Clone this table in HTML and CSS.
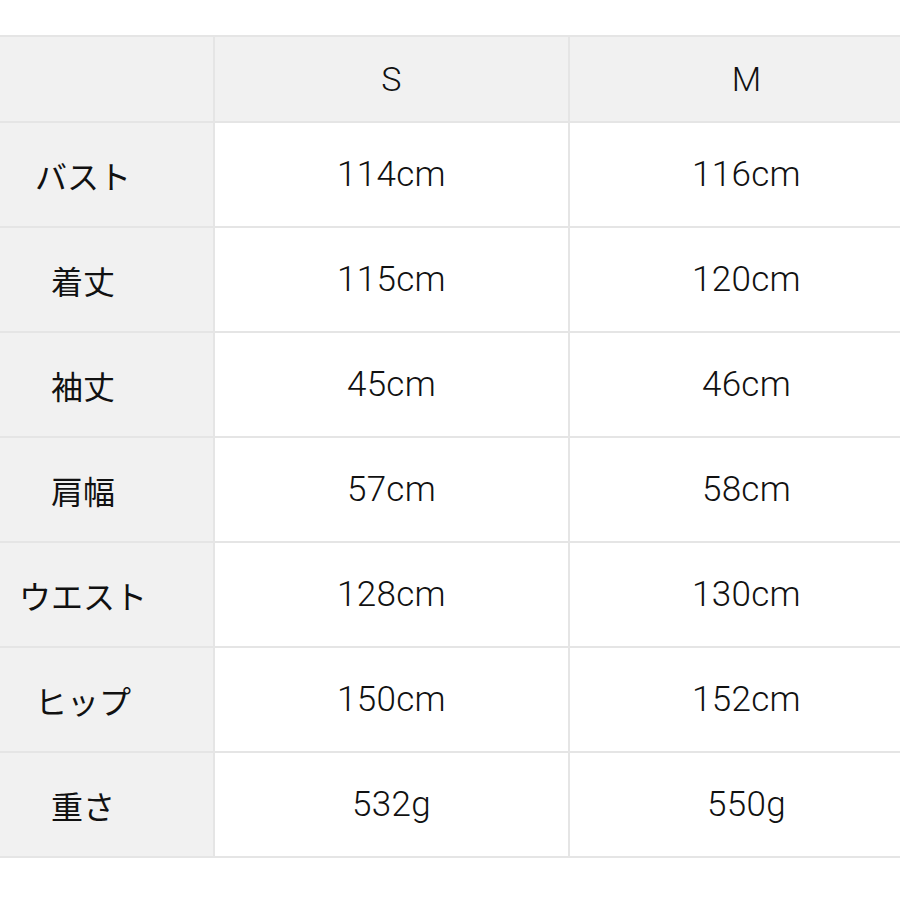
FILE: index.html
```html
<!DOCTYPE html>
<html lang="ja">
<head>
<meta charset="utf-8">
<link rel="stylesheet" href="styles.css">
</head>
<body>
<div class="size-table">
  <div class="cell head label"></div>
  <div class="cell head">S</div>
  <div class="cell head">M</div>

  <div class="cell label">バスト</div>
  <div class="cell">114cm</div>
  <div class="cell">116cm</div>

  <div class="cell label">着丈</div>
  <div class="cell">115cm</div>
  <div class="cell">120cm</div>

  <div class="cell label">袖丈</div>
  <div class="cell">45cm</div>
  <div class="cell">46cm</div>

  <div class="cell label">肩幅</div>
  <div class="cell">57cm</div>
  <div class="cell">58cm</div>

  <div class="cell label">ウエスト</div>
  <div class="cell">128cm</div>
  <div class="cell">130cm</div>

  <div class="cell label">ヒップ</div>
  <div class="cell">150cm</div>
  <div class="cell">152cm</div>

  <div class="cell label">重さ</div>
  <div class="cell">532g</div>
  <div class="cell">550g</div>
</div>
</body>
</html>
```

FILE: styles.css
```css
html, body {
  margin: 0;
  padding: 0;
  background: #ffffff;
  overflow: hidden;
}

body {
  width: 900px;
  height: 900px;
  font-family: Roboto, "Liberation Sans", "Noto Sans CJK JP", sans-serif;
  font-weight: 300;
  color: #111111;
}

.size-table {
  margin-top: 35px;
  margin-left: -47px;
  width: 970px;
  display: grid;
  grid-template-columns: 260px 353px 353px;
  grid-template-rows: 84px repeat(7, 103px);
  gap: 2px;
  padding: 2px 0 2px 0;
  background: #e5e5e5;
}

.cell {
  background: #ffffff;
  display: flex;
  align-items: center;
  justify-content: center;
  font-size: 35px;
  letter-spacing: 0.3px;
}

.head {
  background: #f1f1f1;
  font-size: 34px;
}

.label {
  background: #f1f1f1;
  font-family: "Noto Sans CJK JP", sans-serif;
  font-weight: 400;
  font-size: 32px;
  letter-spacing: 0;
}
```
